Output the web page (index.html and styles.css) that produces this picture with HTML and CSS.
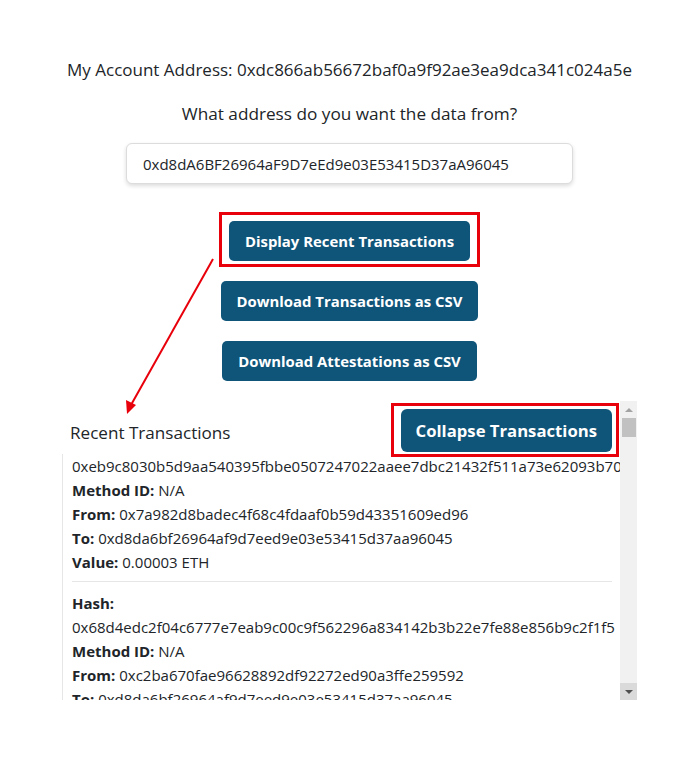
FILE: index.html
```html
<!DOCTYPE html>
<html lang="en">
<head>
<meta charset="utf-8">
<title>Transactions</title>
<link rel="stylesheet" href="styles.css">
</head>
<body>
<main class="page">
  <p class="account">My Account Address: 0xdc866ab56672baf0a9f92ae3ea9dca341c024a5e</p>
  <p class="question">What address do you want the data from?</p>
  <input class="addr-input" type="text" value="0xd8dA6BF26964aF9D7eEd9e03E53415D37aA96045">
  <div class="actions">
    <button class="btn">Display Recent Transactions</button>
    <button class="btn">Download Transactions as CSV</button>
    <button class="btn">Download Attestations as CSV</button>
  </div>
  <section class="panel">
    <div class="panel-body">
      <div class="panel-head">
        <h2 class="panel-title">Recent Transactions</h2>
        <button class="btn btn-collapse">Collapse Transactions</button>
      </div>
      <div class="tx-list">
        <div class="tx">
          <div class="row">0xeb9c8030b5d9aa540395fbbe0507247022aaee7dbc21432f511a73e62093b70a</div>
          <div class="row"><b>Method ID:</b> N/A</div>
          <div class="row"><b>From:</b> 0x7a982d8badec4f68c4fdaaf0b59d43351609ed96</div>
          <div class="row"><b>To:</b> 0xd8da6bf26964af9d7eed9e03e53415d37aa96045</div>
          <div class="row"><b>Value:</b> 0.00003 ETH</div>
        </div>
        <div class="tx">
          <div class="row"><b>Hash:</b></div>
          <div class="row">0x68d4edc2f04c6777e7eab9c00c9f562296a834142b3b22e7fe88e856b9c2f1f5</div>
          <div class="row"><b>Method ID:</b> N/A</div>
          <div class="row"><b>From:</b> 0xc2ba670fae96628892df92272ed90a3ffe259592</div>
          <div class="row"><b>To:</b> 0xd8da6bf26964af9d7eed9e03e53415d37aa96045</div>
        </div>
      </div>
    </div>
    <div class="scrollbar">
      <div class="sb-btn sb-up"><span class="tri tri-up"></span></div>
      <div class="sb-track"><div class="sb-thumb"></div></div>
      <div class="sb-btn sb-down"><span class="tri tri-down"></span></div>
    </div>
  </section>
  <svg class="annotations" width="696" height="763" viewBox="0 0 696 763" aria-hidden="true">
    <rect x="220.5" y="213.5" width="258" height="52" fill="none" stroke="#e8000b" stroke-width="3"/>
    <rect x="392.5" y="404.5" width="225" height="51" fill="none" stroke="#e8000b" stroke-width="3"/>
    <line x1="213" y1="259" x2="131" y2="405" stroke="#e8000b" stroke-width="2"/>
    <polygon points="127,414 126,400 136,405" fill="#e8000b"/>
  </svg>
</main>
</body>
</html>
```
FILE: styles.css
```css
* { box-sizing: border-box; }
html, body { margin: 0; padding: 0; background: #fff; }
body {
  font-family: "Open Sans", "Noto Sans", sans-serif;
  color: #212529;
}
.page {
  position: relative;
  width: 696px;
  min-height: 763px;
  padding: 58px 0 0 3px;
  display: flex;
  flex-direction: column;
  align-items: center;
}
.account {
  margin: 0;
  font-size: 17px;
  line-height: 24px;
}
.question {
  margin: 20px 0 0;
  font-size: 17.2px;
  line-height: 24px;
}
.addr-input {
  margin-top: 17px;
  width: 447px;
  height: 41px;
  padding: 0 16px;
  border: 1px solid #dcdcdc;
  border-radius: 6px;
  box-shadow: 0 2px 4px rgba(0,0,0,0.14);
  font-family: inherit;
  font-size: 15px;
  color: #212529;
  outline: none;
}
.actions {
  margin-top: 37px;
  display: flex;
  flex-direction: column;
  align-items: center;
  gap: 20px;
}
.btn {
  height: 40px;
  padding: 0 16px;
  border: none;
  border-radius: 5px;
  background: #0f5479;
  color: #fff;
  font-family: inherit;
  font-weight: 700;
  font-size: 14.9px;
  cursor: pointer;
}
.panel {
  margin-top: 20px;
  width: 575px;
  height: 299px;
  display: flex;
  background: #fff;
}
.panel-body {
  flex: 1;
  min-width: 0;
  overflow: hidden;
  display: flex;
  flex-direction: column;
}
.panel-head {
  display: flex;
  align-items: center;
  justify-content: space-between;
  padding: 8px 8px 2px 8px;
}
.panel-title {
  margin: 3px 0 0;
  font-size: 17.1px;
  font-weight: 400;
}
.btn-collapse {
  height: 43px;
  padding: 0 15px;
  border-radius: 6px;
  font-size: 16.7px;
}
.tx-list {
  border-left: 1px solid #e6e6e6;
  padding-left: 9px;
  padding-right: 8px;
}
.tx {
  font-size: 15px;
  line-height: 24px;
  white-space: nowrap;
}
.tx + .tx {
  border-top: 1px solid #e6e6e6;
  margin-top: 7px;
  padding-top: 9px;
}
.row b { font-weight: 700; }
.scrollbar {
  width: 17px;
  flex: none;
  display: flex;
  flex-direction: column;
  background: #f1f1f1;
}
.sb-btn {
  height: 17px;
  display: flex;
  align-items: center;
  justify-content: center;
  background: #f1f1f1;
}
.sb-down { background: #dadada; }
.sb-track {
  flex: 1;
  padding: 0 1px 0 2px;
}
.sb-thumb {
  height: 19px;
  background: #c1c1c1;
}
.tri {
  width: 0;
  height: 0;
  border-left: 4px solid transparent;
  border-right: 4px solid transparent;
}
.tri-up { border-bottom: 4px solid #a3a3a3; }
.tri-down { border-top: 4px solid #505050; }
.annotations {
  position: absolute;
  top: 0;
  left: 0;
  pointer-events: none;
}
```
